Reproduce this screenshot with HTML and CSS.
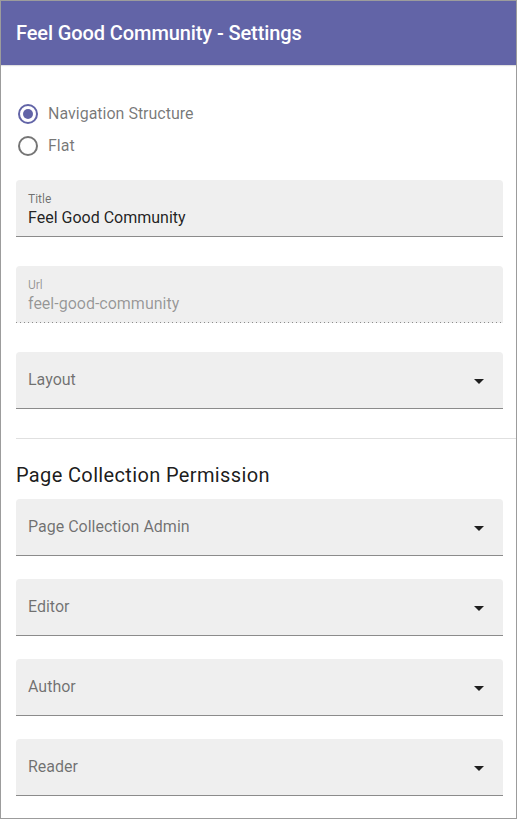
FILE: index.html
```html
<!DOCTYPE html>
<html lang="en">
<head>
<meta charset="utf-8">
<title>Feel Good Community - Settings</title>
<link rel="stylesheet" href="styles.css">
</head>
<body>
<div class="page">
  <header class="app-header">
    <h1 class="app-title">Feel Good Community - Settings</h1>
  </header>
  <main class="content">
    <div class="radio-group">
      <label class="radio-row">
        <span class="radio radio-checked"><span class="radio-dot"></span></span>
        <span class="radio-label">Navigation Structure</span>
      </label>
      <label class="radio-row">
        <span class="radio"></span>
        <span class="radio-label">Flat</span>
      </label>
    </div>

    <div class="field-wrap field-wrap-lg">
      <div class="field field-filled">
        <span class="field-label">Title</span>
        <span class="field-value">Feel Good Community</span>
      </div>
    </div>

    <div class="field-wrap field-wrap-lg">
      <div class="field field-filled field-disabled">
        <span class="field-label">Url</span>
        <span class="field-value">feel-good-community</span>
      </div>
    </div>

    <div class="field-wrap field-wrap-lg">
      <div class="field field-select">
        <span class="field-placeholder">Layout</span>
        <span class="select-arrow"></span>
      </div>
    </div>

    <hr class="divider">

    <h2 class="section-title">Page Collection Permission</h2>

    <div class="field-wrap">
      <div class="field field-select">
        <span class="field-placeholder">Page Collection Admin</span>
        <span class="select-arrow"></span>
      </div>
    </div>
    <div class="field-wrap">
      <div class="field field-select">
        <span class="field-placeholder">Editor</span>
        <span class="select-arrow"></span>
      </div>
    </div>
    <div class="field-wrap">
      <div class="field field-select">
        <span class="field-placeholder">Author</span>
        <span class="select-arrow"></span>
      </div>
    </div>
    <div class="field-wrap">
      <div class="field field-select">
        <span class="field-placeholder">Reader</span>
        <span class="select-arrow"></span>
      </div>
    </div>
  </main>
</div>
</body>
</html>
```

FILE: styles.css
```css
* { box-sizing: border-box; }

html, body {
  margin: 0;
  padding: 0;
  background: #ffffff;
}

body {
  font-family: Roboto, "Liberation Sans", Arial, sans-serif;
  color: rgba(0, 0, 0, 0.87);
}

.page {
  width: 517px;
  height: 819px;
  border: 1px solid #9c9c9c;
  overflow: hidden;
  display: flex;
  flex-direction: column;
}

.app-header {
  height: 64px;
  flex: 0 0 64px;
  background: #6264a7;
  display: flex;
  align-items: center;
  padding-left: 15px;
  box-shadow: 0 1px 1px rgba(0, 0, 0, 0.12);
}

.app-title {
  margin: 0;
  color: #ffffff;
  font-size: 20px;
  line-height: 24px;
  font-weight: 500;
  letter-spacing: -0.1px;
}

.content {
  padding: 33px 13px 0 15px;
  display: flex;
  flex-direction: column;
}

.radio-group {
  display: flex;
  flex-direction: column;
  margin-bottom: 18px;
}

.radio-row {
  height: 32px;
  display: flex;
  align-items: center;
  padding-left: 2px;
}

.radio {
  width: 20px;
  height: 20px;
  border-radius: 50%;
  border: 2px solid rgba(0, 0, 0, 0.54);
  display: flex;
  align-items: center;
  justify-content: center;
  flex: 0 0 20px;
}

.radio-checked {
  border-color: #6264a7;
}

.radio-dot {
  width: 10px;
  height: 10px;
  border-radius: 50%;
  background: #6264a7;
}

.radio-label {
  margin-left: 10px;
  font-size: 16px;
  line-height: 20px;
  color: rgba(0, 0, 0, 0.54);
}

.field-wrap {
  padding-bottom: 23px;
}

.field-wrap-lg {
  padding-bottom: 29px;
}

.field {
  height: 57px;
  background: #efefef;
  border-radius: 4px 4px 0 0;
  border-bottom: 1px solid rgba(0, 0, 0, 0.42);
  padding: 0 12px;
  position: relative;
}

.field-filled {
  display: flex;
  flex-direction: column;
  padding-top: 12px;
}

.field-label {
  font-size: 12px;
  line-height: 14px;
  color: rgba(0, 0, 0, 0.54);
}

.field-value {
  margin-top: 2px;
  font-size: 16px;
  line-height: 20px;
  color: rgba(0, 0, 0, 0.87);
}

.field-disabled {
  border-bottom-color: transparent;
}

.field-disabled::after {
  content: "";
  position: absolute;
  left: 0;
  right: 0;
  bottom: -1px;
  height: 1px;
  background-image: linear-gradient(to right, rgba(0, 0, 0, 0.42) 0, rgba(0, 0, 0, 0.42) 33%, transparent 0);
  background-size: 4px 100%;
  background-repeat: repeat-x;
}

.field-disabled .field-label,
.field-disabled .field-value {
  color: rgba(0, 0, 0, 0.38);
}

.field-select {
  display: flex;
  align-items: center;
  justify-content: space-between;
  padding-right: 19px;
}

.field-placeholder {
  font-size: 16px;
  line-height: 20px;
  color: rgba(0, 0, 0, 0.54);
}

.select-arrow {
  width: 0;
  height: 0;
  border-left: 5px solid transparent;
  border-right: 5px solid transparent;
  border-top: 5px solid rgba(0, 0, 0, 0.87);
  margin-top: 2px;
}

.divider {
  margin: 0 -13px 0 0;
  border: 0;
  border-top: 1px solid rgba(0, 0, 0, 0.12);
  height: 0;
}

.section-title {
  margin: 24px 0 12px;
  font-size: 20px;
  line-height: 24px;
  font-weight: 400;
  letter-spacing: 0.36px;
  color: rgba(0, 0, 0, 0.9);
}
```
